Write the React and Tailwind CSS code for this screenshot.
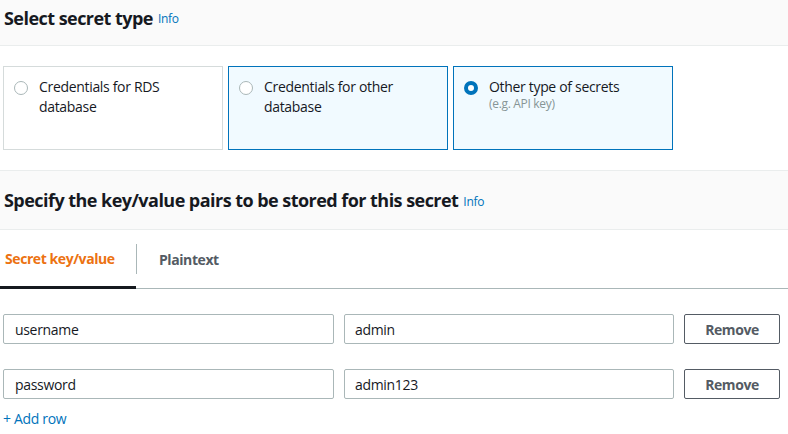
import React, { useState } from 'react';

const font = { fontFamily: '"Open Sans", "Noto Sans", Arial, sans-serif' };

const options = [
    { id: 'rds', title: 'Credentials for RDS database', sub: null },
    { id: 'other-db', title: 'Credentials for other database', sub: null },
    { id: 'other', title: 'Other type of secrets', sub: '(e.g. API key)' },
];

const Radio = ({ checked }) => (
    <span
        className={
            checked
                ? 'mt-[4px] shrink-0 w-[14px] h-[14px] rounded-full border-[4px] border-[#0073bb] bg-white'
                : 'mt-[4px] shrink-0 w-[14px] h-[14px] rounded-full border border-[#aab7b8] bg-white'
        }
    />
);

export default function App() {
    const [selected, setSelected] = useState('other');
    const [rows] = useState([
        { key: 'username', value: 'admin' },
        { key: 'password', value: 'admin123' },
    ]);

    return (
        <div className="w-[788px] h-[434px] bg-white overflow-hidden text-[#16191f] tracking-[-0.02em]" style={font}>
            {/* Secret type */}
            <div className="h-[46px] bg-[#fafafa] border-b border-[#eaeded] px-[4px] flex items-center pb-[10px]">
                <h2 className="text-[18px] font-bold leading-[22px] tracking-[-0.03em]">Select secret type</h2>
                <a className="ml-[5px] text-[12px] text-[#0073bb] mt-[3px]">Info</a>
            </div>

            <div className="flex gap-[5px] px-[3px] pt-[20px]">
                {options.map((opt) => {
                    const active = selected === opt.id || opt.id === 'other-db';
                    return (
                        <div
                            key={opt.id}
                            onClick={() => setSelected(opt.id)}
                            className={
                                active
                                    ? 'w-[220px] h-[84px] border border-[#0073bb] bg-[#f1faff] flex gap-[11px] pl-[10px] pr-[8px] pt-[10px]'
                                    : 'w-[220px] h-[84px] border border-[#d5dbdb] bg-white flex gap-[11px] pl-[10px] pr-[8px] pt-[10px]'
                            }
                        >
                            <Radio checked={selected === opt.id} />
                            <div>
                                <div className="text-[14px] leading-[20px]">{opt.title}</div>
                                {opt.sub && <div className="text-[12px] leading-[14px] text-[#879596]">{opt.sub}</div>}
                            </div>
                        </div>
                    );
                })}
            </div>

            {/* Key/value pairs */}
            <div className="mt-[20px] h-[60px] bg-[#fafafa] border-y border-[#eaeded] px-[4px] flex items-center">
                <h2 className="text-[18px] font-bold leading-[22px] tracking-[-0.03em]">Specify the key/value pairs to be stored for this secret</h2>
                <a className="ml-[5px] text-[12px] text-[#0073bb] mt-[3px]">Info</a>
            </div>

            <div className="flex h-[59px] border-b border-[#aab7b8]">
                <div className="w-[136px] flex items-center pl-[5px] border-b-[3px] border-[#16191f] -mb-[1px]">
                    <span className="text-[14px] font-bold text-[#ec7211] tracking-[-0.03em]">Secret key/value</span>
                </div>
                <div className="flex items-center">
                    <span className="w-px h-[30px] bg-[#aab7b8]" />
                    <span className="ml-[22px] text-[14px] font-bold text-[#545b64] tracking-[-0.03em]">Plaintext</span>
                </div>
            </div>

            <div className="px-[3px] pt-[25px] flex flex-col gap-[25px]">
                {rows.map((row) => (
                    <div key={row.key} className="flex gap-[10px]">
                        <div className="w-[331px] h-[30px] border border-[#aab7b8] rounded-[2px] px-[11px] flex items-center text-[14px]">
                            {row.key}
                        </div>
                        <div className="w-[330px] h-[30px] border border-[#aab7b8] rounded-[2px] px-[10px] flex items-center text-[14px]">
                            {row.value}
                        </div>
                        <button className="w-[96px] h-[30px] border border-[#545b64] rounded-[2px] text-[14px] font-bold text-[#545b64] tracking-[-0.03em]">
                            Remove
                        </button>
                    </div>
                ))}
            </div>
            <div className="px-[3px] mt-[11px] text-[14px] text-[#0073bb] leading-[18px]">+ Add row</div>
        </div>
    );
}
